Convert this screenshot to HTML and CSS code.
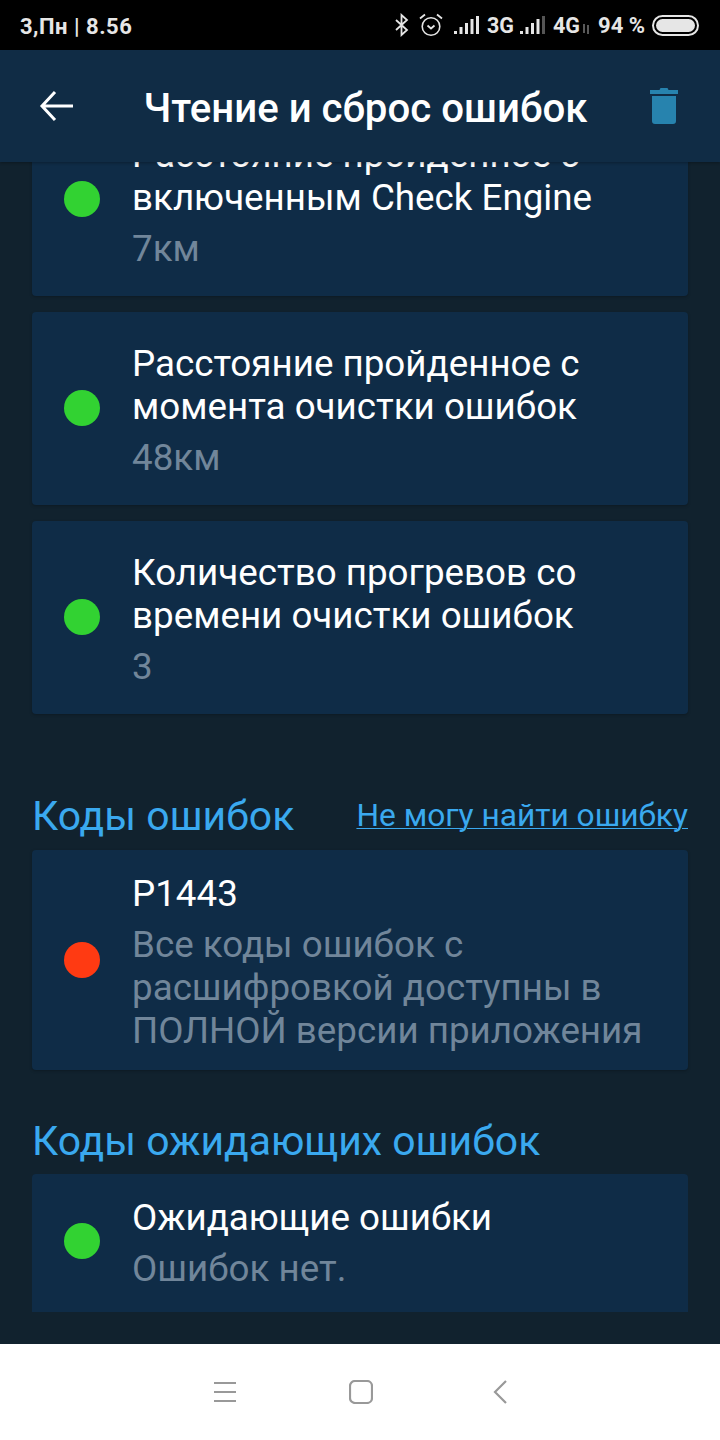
FILE: index.html
```html
<!DOCTYPE html>
<html lang="ru">
<head>
  <meta charset="UTF-8" />
  <meta name="viewport" content="width=device-width, initial-scale=1" />
  <title>Чтение и сброс ошибок</title>
  <link rel="stylesheet" href="styles.css">
</head>
<body>
  <div class="status-bar">
    <span class="status-time">3,Пн | 8.56</span>
    <div class="status-icons">
      <svg class="ic-bt" width="16" height="24" viewBox="0 0 16 24"><path d="M2 7l11 10-5.500 5V2L13 7 2 17" fill="none" stroke="#e6e6e6" stroke-width="1.800"/></svg>
      <svg class="ic-alarm" width="24" height="24" viewBox="0 0 24 24"><circle cx="12" cy="13.500" r="8.800" fill="none" stroke="#e6e6e6" stroke-width="1.600"/><path d="M8.500 12.500l3.500 3 3.500-3M1 5.500L6 1.500M23 5.500L18 1.500" fill="none" stroke="#e6e6e6" stroke-width="1.800"/></svg>
      <svg class="ic-signal" width="26" height="20" viewBox="0 0 26 20"><path d="M0 16h3v3H0zM5.500 12h3v7h-3zM11 8h3v11h-3zM16.500 4h3v15h-3zM22 1h3v18h-3z" fill="#e6e6e6"/></svg>
      <span class="net">3G</span>
      <svg class="ic-signal ic-signal-2" width="26" height="20" viewBox="0 0 26 20"><path d="M0 16h3v3H0zM5.500 12h3v7h-3zM11 8h3v11h-3zM16.500 4h3v15h-3z" fill="#e6e6e6"/><path d="M22 1h3v18h-3z" fill="#555"/></svg>
      <span class="net">4G</span>
      <svg class="ic-updown" width="8" height="10" viewBox="0 0 8 10"><path d="M2 0v9M6 1v9" stroke="#777" stroke-width="1.500"/></svg>
      <span class="battery-text">94 %</span>
      <div class="battery"><div class="battery-fill"></div></div>
    </div>
  </div>

  <header class="app-bar">
    <svg class="back" width="36" height="32" viewBox="0 0 36 32"><path d="M34 16H4M16 2L3 16l13 14" fill="none" stroke="#fff" stroke-width="3"/></svg>
    <h1>Чтение и сброс ошибок</h1>
    <svg class="trash" width="28" height="36" viewBox="0 0 28 36"><path d="M0 2h9.500l1-2h7l1 2H28v4H0zM2 8h24v25c0 2-1 3-3 3H5c-2 0-3-1-3-3z" fill="#2783ae"/></svg>
  </header>

  <main class="content">
    <div class="list">
      <div class="card card-two">
        <span class="dot green"></span>
        <div class="card-text">
          <div class="title">Расстояние пройденное с включенным Check Engine</div>
          <div class="sub">7км</div>
        </div>
      </div>
      <div class="card card-two">
        <span class="dot green"></span>
        <div class="card-text">
          <div class="title">Расстояние пройденное с момента очистки ошибок</div>
          <div class="sub">48км</div>
        </div>
      </div>
      <div class="card card-two">
        <span class="dot green"></span>
        <div class="card-text">
          <div class="title">Количество прогревов со времени очистки ошибок</div>
          <div class="sub">3</div>
        </div>
      </div>

      <div class="section-head first">
        <h2>Коды ошибок</h2>
        <a class="link" href="#">Не могу найти ошибку</a>
      </div>
      <div class="card card-code">
        <span class="dot red"></span>
        <div class="card-text">
          <div class="title">P1443</div>
          <div class="sub">Все коды ошибок с расшифровкой доступны в ПОЛНОЙ версии приложения</div>
        </div>
      </div>

      <div class="section-head">
        <h2>Коды ожидающих ошибок</h2>
      </div>
      <div class="card card-last">
        <span class="dot green"></span>
        <div class="card-text">
          <div class="title">Ожидающие ошибки</div>
          <div class="sub">Ошибок нет.</div>
        </div>
      </div>
    </div>
  </main>

  <nav class="nav-bar">
    <svg class="nav-menu" width="22" height="20" viewBox="0 0 22 20"><path d="M0 1h22M0 10h22M0 19h22" stroke="#999" stroke-width="2"/></svg>
    <svg class="nav-home" width="24" height="24" viewBox="0 0 24 24"><rect x="1" y="1" width="22" height="22" rx="5" fill="none" stroke="#999" stroke-width="2.200"/></svg>
    <svg class="nav-back" width="14" height="24" viewBox="0 0 14 24"><path d="M13 1L2 12l11 11" fill="none" stroke="#999" stroke-width="2.200"/></svg>
  </nav>
</body>
</html>
```

FILE: styles.css
```css
* {
  box-sizing: border-box;
}
html, body {
  height: 100%;
}
body {
  margin: 0;
  height: 1440px;
  display: flex;
  flex-direction: column;
  overflow: hidden;
  font-family: Roboto, "Noto Sans", sans-serif;
  background-color: #11222e;
  color: white;
}

.status-bar {
  height: 50px;
  flex: none;
  background-color: #000;
  color: #e6e6e6;
  display: flex;
  align-items: center;
  justify-content: space-between;
  padding: 0 21px 0 20px;
  font-weight: 700;
}
.status-time {
  font-size: 22px;
  letter-spacing: 0.5px;
  padding-top: 2px;
}
.status-icons {
  display: flex;
  align-items: center;
}
.ic-alarm {
  margin-left: 9px;
}
.ic-signal {
  margin-left: 11px;
}
.ic-signal-2 {
  margin-left: 6px;
}
.net {
  font-size: 21.5px;
  margin-left: 7px;
  padding-top: 1px;
}
.ic-updown {
  margin: 8px 0 0 2px;
}
.battery-text {
  font-size: 22px;
  margin-left: 8px;
}
.battery {
  width: 47px;
  height: 21px;
  margin-left: 7px;
  border: 2px solid #e6e6e6;
  border-radius: 11px;
  padding: 2px;
}
.battery-fill {
  height: 100%;
  background-color: #e6e6e6;
  border-radius: 7px;
}

.app-bar {
  height: 112px;
  flex: none;
  position: relative;
  z-index: 1;
  background-color: #102c45;
  box-shadow: 0 1px 3px rgba(0, 0, 0, 0.3);
  display: flex;
  align-items: center;
  padding: 0 42px 0 39px;
}
.app-bar h1 {
  flex: 1;
  margin: 0;
  font-size: 40.2px;
  font-weight: 500;
  text-align: center;
  padding: 4px 0 0 6px;
  white-space: nowrap;
}

.content {
  flex: 1;
  overflow: hidden;
  min-height: 0;
}
.list {
  margin-top: -59px;
  padding: 0 32px;
}

.card {
  display: flex;
  align-items: center;
  background-color: #0f2c47;
  border-radius: 4px;
  box-shadow: 0 1px 3px rgba(0, 0, 0, 0.25);
  padding-left: 32px;
  margin-bottom: 16px;
}
.card-two {
  height: 193px;
}
.card-two .dot {
  margin-bottom: 1px;
}
.card-two .card-text {
  margin-top: 3px;
}
.card-code {
  height: 220px;
  margin-bottom: 0;
}
.card-code .card-text {
  margin-top: 4px;
}
.card-last {
  height: 138px;
  margin-bottom: 0;
  border-radius: 4px 4px 0 0;
  box-shadow: none;
}
.card-last .dot {
  margin-bottom: 4px;
}
.card-last .card-text {
  margin-top: -1px;
}
.dot {
  flex: none;
  width: 36px;
  height: 36px;
  border-radius: 50%;
  margin-right: 32px;
}
.green {
  background-color: #32d232;
}
.red {
  background-color: #ff3a12;
}
.card-text {
  flex: 1;
  padding-right: 30px;
}
.title {
  font-size: 36.75px;
  line-height: 43px;
}
.sub {
  font-size: 36.75px;
  line-height: 43px;
  margin-top: 8px;
  color: #71869a;
}

.section-head {
  display: flex;
  align-items: flex-start;
  justify-content: space-between;
  margin-top: 41px;
  height: 63px;
}
.section-head.first {
  margin-top: 72px;
  height: 64px;
}
.section-head h2 {
  margin: 0;
  font-size: 40.9px;
  line-height: 60px;
  font-weight: 400;
  color: #3aa9ef;
}
.link {
  font-size: 31.7px;
  line-height: 60px;
  color: #3aa9ef;
  text-decoration: underline;
  text-decoration-thickness: 1px;
  text-underline-offset: 2px;
}

.nav-bar {
  height: 96px;
  flex: none;
  background-color: #fff;
  display: flex;
  align-items: center;
  padding-left: 214px;
}
.nav-home {
  margin-left: 113px;
}
.nav-back {
  margin-left: 120px;
}
```
